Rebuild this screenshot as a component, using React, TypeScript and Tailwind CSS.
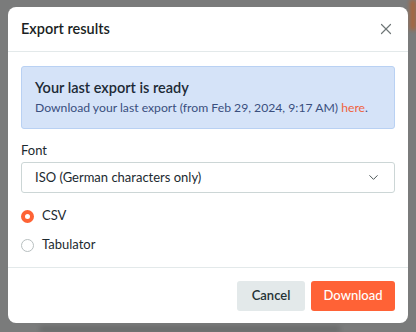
import { X, ChevronDown } from "lucide-react";

export default function App() {
  return (
    <div className="relative h-[332px] w-[416px] overflow-hidden bg-[#7a7b7b] font-['Lato',sans-serif]">
      <div className="absolute right-0 top-0 h-[30px] w-[6px] bg-[#a8643c] blur-[2px]" />
      <div className="absolute left-[40px] top-[326px] h-[6px] w-[300px] bg-[#6a6b6b] blur-[2px]" />

      <div className="absolute left-[8px] top-[7px] flex w-[400px] flex-col rounded-lg bg-white">
        <header className="flex h-[45px] items-center justify-between border-b border-[#e3e9ea] px-[13px]">
          <h2 className="text-[14.5px] font-semibold text-[#1a1f24]">Export results</h2>
          <X className="size-[18px] text-[#6f7677]" strokeWidth={1.6} />
        </header>

        <div className="flex flex-col px-[13px] pt-[14px]">
          <div className="flex h-[63px] flex-col justify-center rounded-[3px] border border-[#b9d1f3] bg-[#d5e3f8] px-[13px]">
            <p className="text-[14.5px] font-semibold leading-5 text-[#1c2a36]">
              Your last export is ready
            </p>
            <p className="text-[12.2px] leading-5 text-[#3a4f7e]">
              Download your last export (from Feb 29, 2024, 9:17 AM){" "}
              <span className="text-[#f0623d]">here</span>.
            </p>
          </div>

          <label className="mt-[11px] text-[13px] leading-5 text-[#1c2a30]">Font</label>
          <div className="mt-[2px] flex h-[31px] items-center justify-between rounded-[3px] border border-[#ccd6d6] px-[13px]">
            <span className="text-[13px] text-[#1c2a30]">ISO (German characters only)</span>
            <ChevronDown className="size-[15px] text-[#4c5657]" strokeWidth={1.6} />
          </div>

          <div className="mt-[13px] flex h-[20px] items-center gap-[8px]">
            <span className="size-[13px] rounded-full border-[4px] border-[#fe6335] bg-white" />
            <span className="text-[13px] text-[#1c2a30]">CSV</span>
          </div>
          <div className="mt-[9px] flex h-[20px] items-center gap-[8px]">
            <span className="size-[13px] rounded-full border border-[#b8bfc0] bg-white" />
            <span className="text-[13px] text-[#1c2a30]">Tabulator</span>
          </div>
        </div>

        <footer className="mt-[12px] flex h-[56px] items-center justify-end gap-[6px] border-t border-[#e3e9ea] px-[13px]">
          <button className="h-[30px] w-[68px] rounded-[3px] bg-[#e3e9ea] text-[13px] font-semibold text-[#253235]">
            Cancel
          </button>
          <button className="h-[30px] w-[84px] rounded-[3px] bg-[#ff6236] text-[13px] font-medium text-white">
            Download
          </button>
        </footer>
      </div>
    </div>
  );
}
